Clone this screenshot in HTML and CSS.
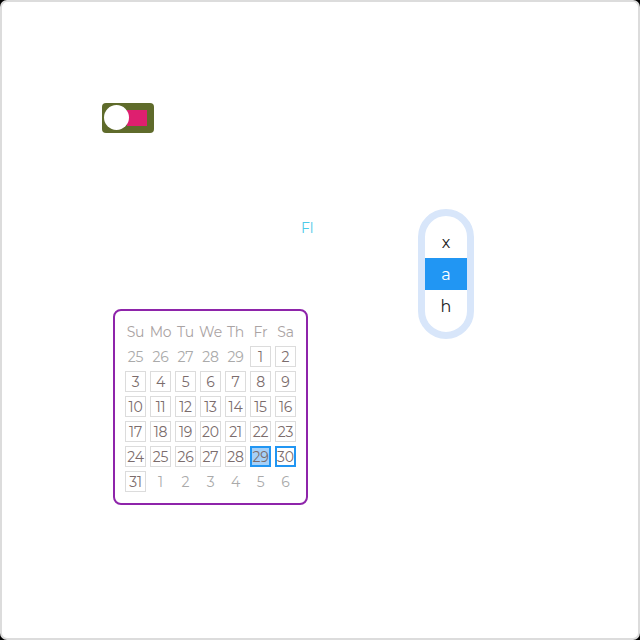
FILE: index.html
```html
<!DOCTYPE html>
<html>
<head>
<meta charset="utf-8">
<link rel="stylesheet" href="styles.css">
</head>
<body>
<div class="frame">
  <div class="toggle">
    <span class="track"></span>
    <span class="knob"></span>
  </div>

  <div class="label">Fl</div>

  <div class="listbox">
    <div class="opt">x</div>
    <div class="opt sel">a</div>
    <div class="opt">h</div>
  </div>

  <div class="calendar">
    <div class="grid">
      <div class="hd">Su</div><div class="hd">Mo</div><div class="hd">Tu</div><div class="hd">We</div><div class="hd">Th</div><div class="hd">Fr</div><div class="hd">Sa</div>
      <div class="d out">25</div><div class="d out">26</div><div class="d out">27</div><div class="d out">28</div><div class="d out">29</div><div class="d">1</div><div class="d">2</div>
      <div class="d">3</div><div class="d">4</div><div class="d">5</div><div class="d">6</div><div class="d">7</div><div class="d">8</div><div class="d">9</div>
      <div class="d">10</div><div class="d">11</div><div class="d">12</div><div class="d">13</div><div class="d">14</div><div class="d">15</div><div class="d">16</div>
      <div class="d">17</div><div class="d">18</div><div class="d">19</div><div class="d">20</div><div class="d">21</div><div class="d">22</div><div class="d">23</div>
      <div class="d">24</div><div class="d">25</div><div class="d">26</div><div class="d">27</div><div class="d">28</div><div class="d selected">29</div><div class="d today">30</div>
      <div class="d">31</div><div class="d out">1</div><div class="d out">2</div><div class="d out">3</div><div class="d out">4</div><div class="d out">5</div><div class="d out">6</div>
    </div>
  </div>
</div>
</body>
</html>
```

FILE: styles.css
```css
html {
  background: #000;
}
body {
  margin: 0;
  font-family: "Montserrat", "Open Sans", "Liberation Sans", sans-serif;
}
.frame {
  position: relative;
  box-sizing: border-box;
  width: 640px;
  height: 640px;
  background: #fff;
  border: 2px solid #dcdcdc;
  border-radius: 7px;
  overflow: hidden;
}

/* toggle */
.toggle {
  position: absolute;
  left: 100px;
  top: 101px;
  width: 52px;
  height: 30px;
  background: #5f6b2b;
  border-radius: 4px;
}
.track {
  position: absolute;
  left: 25px;
  top: 7px;
  width: 20px;
  height: 16px;
  background: #de1f6f;
}
.knob {
  position: absolute;
  left: 2px;
  top: 2px;
  width: 25px;
  height: 25px;
  border-radius: 50%;
  background: #fff;
}

/* label */
.label {
  position: absolute;
  left: 299px;
  top: 217px;
  font-size: 14px;
  line-height: 18px;
  color: #4cc9e8;
}

/* listbox */
.listbox {
  position: absolute;
  left: 416px;
  top: 207px;
  width: 42px;
  padding: 10px 0;
  border: 7px solid #d8e6fa;
  border-radius: 30px;
  background: #fff;
  display: flex;
  flex-direction: column;
}
.opt {
  height: 32px;
  display: flex;
  align-items: center;
  justify-content: center;
  font-size: 16px;
  color: #1a1a1a;
}
.opt.sel {
  background: #2196f3;
  color: #fff;
}

/* calendar */
.calendar {
  position: absolute;
  left: 111px;
  top: 307px;
  padding: 10px 10px 11px 10px;
  border: 2px solid #8e24aa;
  border-radius: 8px;
  background: #fff;
}
.grid {
  display: grid;
  grid-template-columns: repeat(7, 21px);
  grid-auto-rows: 21px;
  gap: 4px;
}
.hd, .d {
  box-sizing: border-box;
  display: flex;
  align-items: center;
  justify-content: center;
  font-size: 14px;
  letter-spacing: -0.2px;
}
.hd {
  color: #aaa3a3;
}
.d {
  border: 1px solid #dcdcdc;
  color: #7b6c6c;
}
.d.out {
  border-color: transparent;
  color: #aaaaaa;
}
.d.selected {
  background: #a6d0f7;
  border: 2px solid #2196f3;
}
.d.today {
  border: 2px solid #2196f3;
}
```
